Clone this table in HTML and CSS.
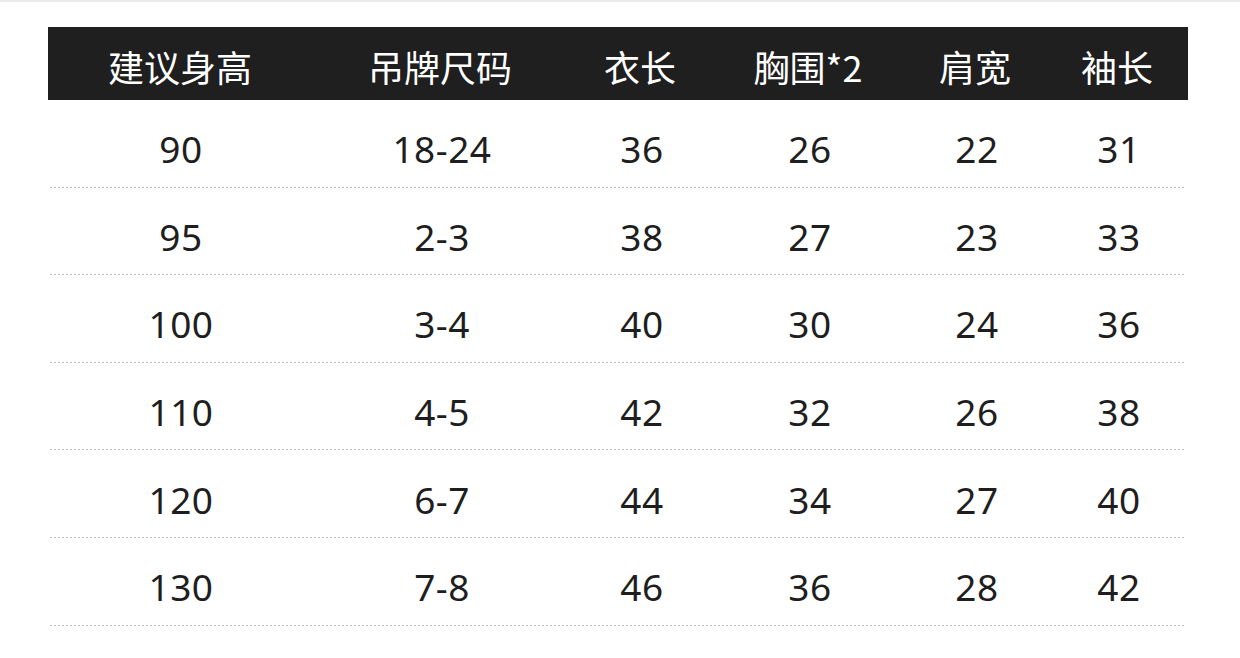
FILE: index.html
```html
<!DOCTYPE html>
<html lang="zh">
<head>
<meta charset="utf-8">
<title>尺码表</title>
<link rel="stylesheet" href="styles.css">
</head>
<body>
<div class="page">
  <div class="table">
    <div class="head">
      <div class="cell">建议身高</div>
      <div class="cell">吊牌尺码</div>
      <div class="cell">衣长</div>
      <div class="cell">胸围*2</div>
      <div class="cell">肩宽</div>
      <div class="cell">袖长</div>
    </div>
    <div class="row"><div class="cell">90</div><div class="cell">18-24</div><div class="cell">36</div><div class="cell">26</div><div class="cell">22</div><div class="cell">31</div></div>
    <div class="row"><div class="cell">95</div><div class="cell">2-3</div><div class="cell">38</div><div class="cell">27</div><div class="cell">23</div><div class="cell">33</div></div>
    <div class="row"><div class="cell">100</div><div class="cell">3-4</div><div class="cell">40</div><div class="cell">30</div><div class="cell">24</div><div class="cell">36</div></div>
    <div class="row"><div class="cell">110</div><div class="cell">4-5</div><div class="cell">42</div><div class="cell">32</div><div class="cell">26</div><div class="cell">38</div></div>
    <div class="row"><div class="cell">120</div><div class="cell">6-7</div><div class="cell">44</div><div class="cell">34</div><div class="cell">27</div><div class="cell">40</div></div>
    <div class="row"><div class="cell">130</div><div class="cell">7-8</div><div class="cell">46</div><div class="cell">36</div><div class="cell">28</div><div class="cell">42</div></div>
  </div>
</div>
</body>
</html>
```
FILE: styles.css
```css
html, body {
  margin: 0;
  padding: 0;
  background: #ffffff;
}
body {
  font-family: "Noto Sans", "Noto Sans CJK SC", sans-serif;
  color: #1e1e1e;
}
.page {
  width: 1240px;
  height: 658px;
  box-sizing: border-box;
  border-top: 2px solid #ececec;
  padding: 25px 52px 0 48px;
}
.table {
  width: 1140px;
}
.head, .row {
  display: grid;
  grid-template-columns: 264px 256px 144px 192px 142px 142px;
}
.head {
  background: #1f1f1f;
  color: #ffffff;
  height: 73px;
  font-family: "Noto Sans CJK SC", sans-serif;
  font-size: 36px;
}
.head .cell {
  display: flex;
  align-items: center;
  justify-content: center;
  padding-top: 4px;
  box-sizing: border-box;
}
.row {
  height: 87.6px;
  box-sizing: border-box;
  margin: 0 2px;
  font-size: 37px;
  letter-spacing: 0.5px;
  background-image: linear-gradient(to right, #b8b8b8 2px, transparent 2px);
  background-size: 4px 1px;
  background-repeat: repeat-x;
  background-position: left bottom;
}
.row .cell {
  display: flex;
  align-items: center;
  justify-content: center;
  padding-top: 10px;
  box-sizing: border-box;
}
.row .cell:first-child { margin-left: -2px; }
```
